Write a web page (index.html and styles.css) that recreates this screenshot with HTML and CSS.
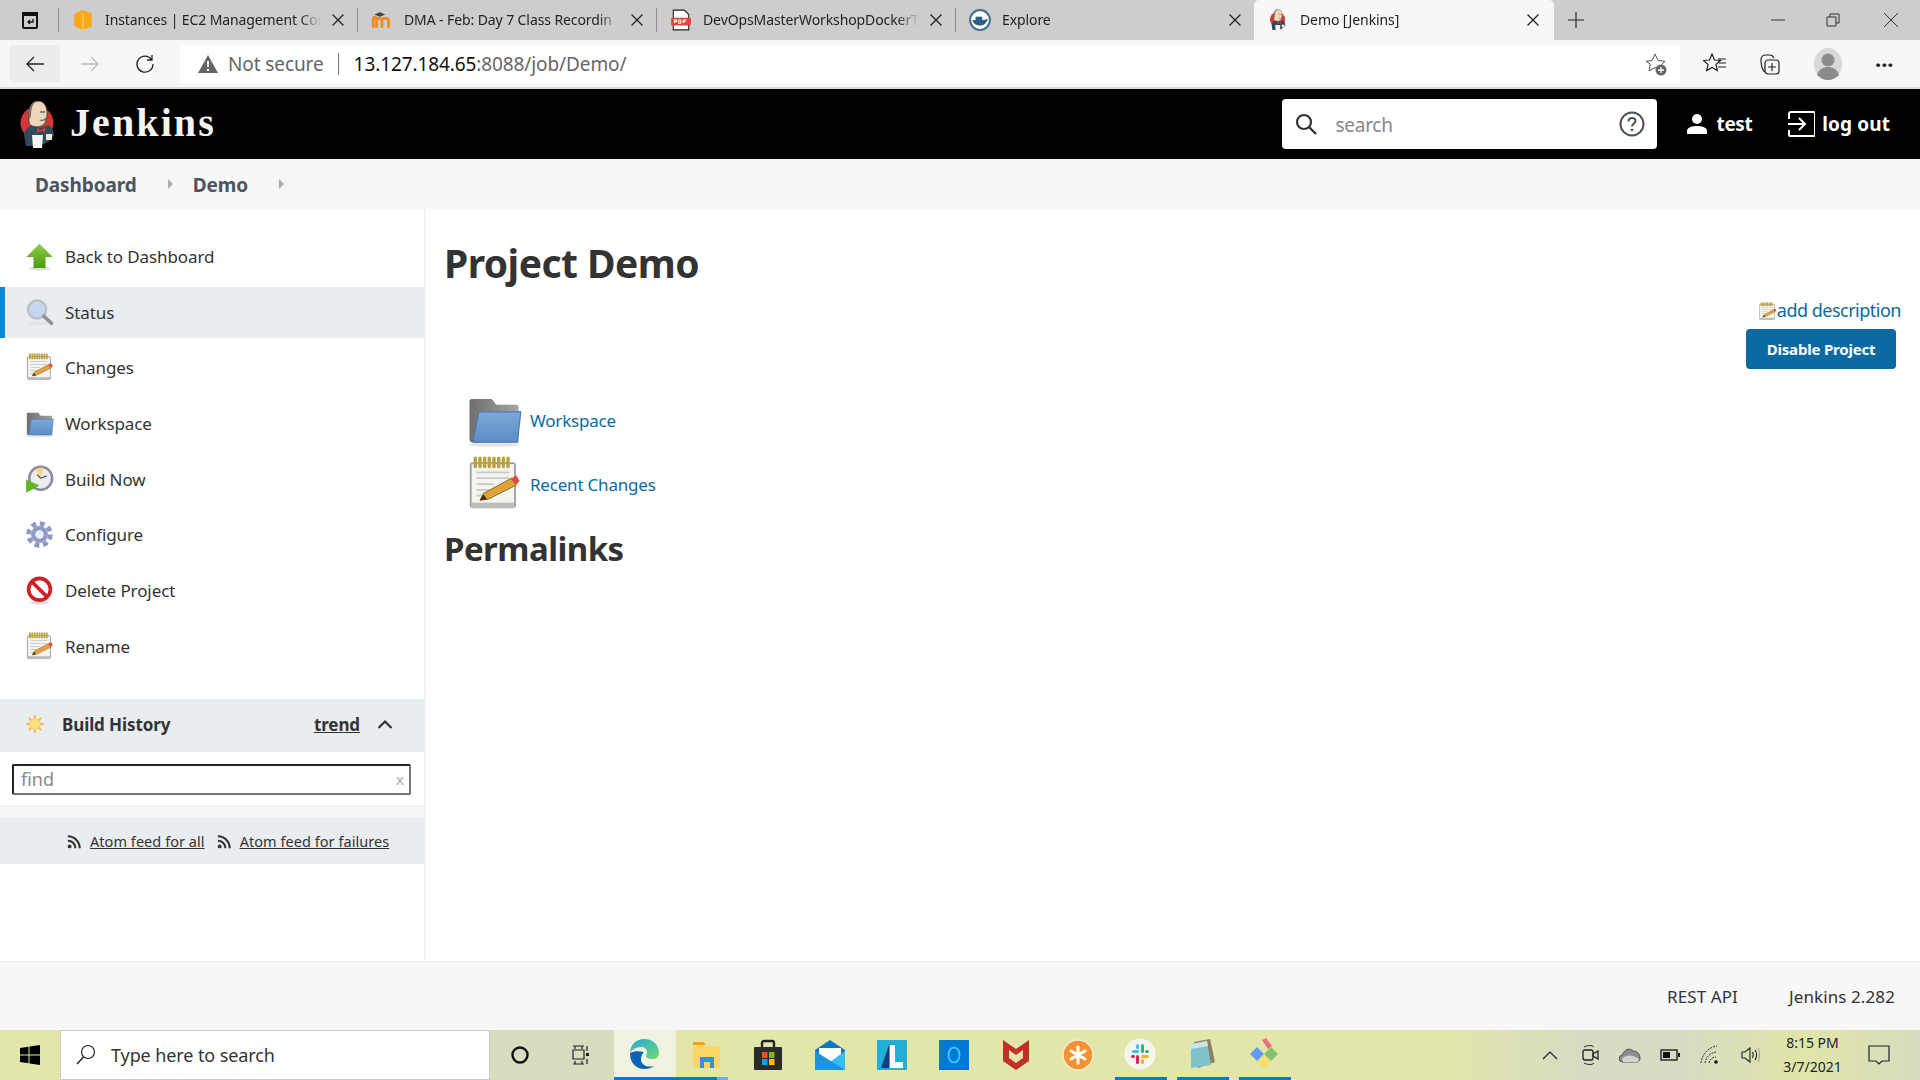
FILE: index.html
```html
<!DOCTYPE html>
<html lang="en">
<head>
    <meta charset="UTF-8">
    <title>Demo [Jenkins]</title>
    <link rel="stylesheet" href="styles.css">
</head>
<body>
    <svg class="defs" aria-hidden="true">
        <defs>
            <linearGradient id="gGreen" x1="0" y1="0" x2="0" y2="1"><stop offset="0" stop-color="#8ccf4a"/><stop offset="1" stop-color="#4c9a0c"/></linearGradient>
            <linearGradient id="gBlue" x1="0" y1="0" x2="0" y2="1"><stop offset="0" stop-color="#7fa9d8"/><stop offset="1" stop-color="#5a8cc6"/></linearGradient>
            <linearGradient id="gGray" x1="0" y1="0" x2="1" y2="0"><stop offset="0" stop-color="#6f6f6f"/><stop offset="1" stop-color="#a3a3a3"/></linearGradient>
            <linearGradient id="gEdge" x1="0" y1="0" x2="1" y2="1"><stop offset="0" stop-color="#2aa7e0"/><stop offset="1" stop-color="#6fd96b"/></linearGradient>
            <symbol id="up" viewBox="0 0 48 48"><ellipse cx="24" cy="44" rx="18" ry="3" fill="#ddd"/><polygon points="24,3 46,25 34,25 34,43 14,43 14,25 2,25" fill="url(#gGreen)"/></symbol>
            <symbol id="lens" viewBox="0 0 48 48"><ellipse cx="22" cy="42" rx="16" ry="3" fill="#e2e2e2"/><circle cx="20" cy="19" r="15" fill="#c3d8f0" stroke="#bcc0c4" stroke-width="4"/><line x1="31" y1="30" x2="44" y2="42" stroke="#8f9499" stroke-width="6" stroke-linecap="round"/></symbol>
            <symbol id="note" viewBox="0 0 48 48"><rect x="4" y="6" width="38" height="38" rx="2" fill="#f4f4f0" stroke="#9a9a9a" stroke-width="1.500"/><rect x="4.500" y="40" width="37" height="4.500" fill="#bdbdbd"/><path d="M8 2v7M12 2v7M16 2v7M20 2v7M24 2v7M28 2v7M32 2v7M36 2v7" stroke="#b9a23f" stroke-width="3" stroke-linecap="round"/><path d="M9 14H37M9 19H37M9 24H24M9 29H20M9 34H16" stroke="#c9c9c9" stroke-width="1.500"/><polygon points="12,38 15,32 39,19 43,25 19,37" fill="#e0a23c" stroke="#8d6420" stroke-width=".8"/><polygon points="38.500,19.500 43,16.500 46,21.500 42.500,25" fill="#df4b3c"/><polygon points="12,38 15,33 18,37" fill="#3b2a14"/></symbol>
            <symbol id="folder" viewBox="0 0 48 48"><ellipse cx="24" cy="45" rx="22" ry="2" fill="#e4e4e4"/><path d="M3 8a2 2 0 0 1 2-2h17l4 5h17a2 2 0 0 1 2 2v30H5a2 2 0 0 1-2-2z" fill="url(#gGray)"/><path d="M11 17H47L44 43H6z" fill="url(#gBlue)" stroke="#4a79b2" stroke-width="1"/></symbol>
            <symbol id="clock" viewBox="0 0 48 48"><circle cx="26" cy="22" r="19" fill="#ececf0" stroke="#8c8aa0" stroke-width="4"/><path d="M26 22L17 7A18 18 0 0 1 31 5z" fill="#f0d98c"/><path d="M26 22L20 16M26 22L36 18" stroke="#555" stroke-width="2"/><polygon points="2,24 24,34 2,46" fill="#62b51c"/></symbol>
            <symbol id="gear" viewBox="0 0 48 48"><circle cx="24" cy="24" r="14" fill="#8f9bc6"/><circle cx="24" cy="24" r="18" fill="none" stroke="#8d99c4" stroke-width="8" stroke-dasharray="8 6.140"/><circle cx="24" cy="24" r="7" fill="#eef0f6"/></symbol>
            <symbol id="stop" viewBox="0 0 48 48"><ellipse cx="24" cy="44" rx="16" ry="3" fill="#ddd"/><circle cx="24" cy="22" r="18" fill="#fff" stroke="#cf2027" stroke-width="6"/><line x1="11" y1="9" x2="37" y2="35" stroke="#cf2027" stroke-width="6"/></symbol>
            <symbol id="rss" viewBox="0 0 16 16"><circle cx="3" cy="13" r="2.200" fill="#333"/><path d="M1 6.500A8.500 8.500 0 0 1 9.500 15M1 1.500A13.500 13.500 0 0 1 14.500 15" fill="none" stroke="#333" stroke-width="2.400"/></symbol>
            <symbol id="x" viewBox="0 0 16 16"><path d="M2.500 2.500L13.500 13.500M13.500 2.500L2.500 13.500" stroke="#222" stroke-width="1.300" fill="none"/></symbol>
            <symbol id="jenkins" viewBox="0 0 36 48"><circle cx="17" cy="23" r="16.500" fill="#d33833"/><path d="M6 46L4 35C5 29 9 26 13 25L20 28 28 25C32 27 34 31 34 36L28 42 20 46z" fill="#2f4a5c"/><path d="M9.500 24C7 13 9 2 18 1c7 0 9.500 7 9 14-.5 6-2.500 10-7 11.500-4 1-8 0-10.500-2.500z" fill="#f0d6b8" stroke="#3a3330" stroke-width=".8"/><path d="M11 16C11 7 13 3 17 1 12 1 8 6 9.500 20z" fill="#6d6b6d"/><path d="M20 12h5M20 20c2 1 5 0 6-2" stroke="#49728b" stroke-width="1.300" fill="none"/><polygon points="17,28 21,30 25,27 25,32 21,31 17,33" fill="#d33833"/><path d="M12 35h11l-1 13h-9z" fill="#f4f4f4"/><rect x="26" y="34" width="6" height="6" fill="#f0e4d4"/></symbol>
        </defs>
    </svg>

    <div class="screen">
        <!-- browser tabs -->
        <div class="tabstrip">
            <div class="tabmenu">
                <svg class="i20" viewBox="0 0 20 20"><path d="M3 3h14v14a1 1 0 0 1-1 1H4a1 1 0 0 1-1-1z" fill="none" stroke="#111" stroke-width="2"/><path d="M3 3h14v3H3z" fill="#111"/><path d="M13 9v3H8m2-2l-2 2 2 2" fill="none" stroke="#111" stroke-width="1.300"/></svg>
            </div>
            <div class="tab">
                <svg class="fav" viewBox="0 0 20 20"><path d="M10 1l8 3v12l-8 3-8-3V4z" fill="#f7a81b"/><path d="M10 4v15" stroke="#fbd071"/></svg>
                <span class="tabtitle">Instances | EC2 Management Cor</span>
                <svg class="tabx"><use href="#x"/></svg>
            </div>
            <div class="tab">
                <svg class="fav" viewBox="0 0 20 20"><path d="M2 17V9c0-2 3-2 3 0v8M5 10c0-2 5-2 5 0v7M10 10c0-2 6-2 6 0v7" fill="none" stroke="#f18a1c" stroke-width="2.500"/><path d="M3 5l5-2 5 2-5 2z" fill="#444"/></svg>
                <span class="tabtitle">DMA - Feb: Day 7 Class Recordin</span>
                <svg class="tabx"><use href="#x"/></svg>
            </div>
            <div class="tab">
                <svg class="fav" viewBox="0 0 20 20"><path d="M3 1h10l4 4v14H3z" fill="#fff" stroke="#222"/><rect x="1" y="8" width="18" height="7" rx="1" fill="#ee3d3d"/><path d="M4 13v-3h2v1.500H4M8 10v3h1.500l.5-1.500-.5-1.500zM12 13v-3h3M12 11.500h2" stroke="#fff" fill="none"/></svg>
                <span class="tabtitle">DevOpsMasterWorkshopDockerT</span>
                <svg class="tabx"><use href="#x"/></svg>
            </div>
            <div class="tab">
                <svg class="fav" viewBox="0 0 20 20"><circle cx="10" cy="10" r="9" fill="#fff" stroke="#3f6f8f" stroke-width="1.800"/><path d="M3 10h11c1-1 2-1 3-1-1 4-4 6-7 6-4 0-6-2-7-5z" fill="#2e5f80"/><path d="M6 7h6v3H6z" fill="#2e5f80"/></svg>
                <span class="tabtitle">Explore</span>
                <svg class="tabx"><use href="#x"/></svg>
            </div>
            <div class="tab tab-active">
                <svg class="fav"><use href="#jenkins"/></svg>
                <span class="tabtitle">Demo [Jenkins]</span>
                <svg class="tabx"><use href="#x"/></svg>
            </div>
            <svg class="newtab" viewBox="0 0 20 20"><path d="M10 1v18M1 10h18" stroke="#222" stroke-width="1.300"/></svg>
            <div class="winbtns">
                <svg class="i16" viewBox="0 0 16 16"><path d="M1 8h14" stroke="#333"/></svg>
                <svg class="i16" viewBox="0 0 16 16"><path d="M2 5h9v9H2zM5 5V2h9v9h-3" fill="none" stroke="#333"/></svg>
                <svg class="i16" viewBox="0 0 16 16"><path d="M1 1l14 14M15 1L1 15" stroke="#333"/></svg>
            </div>
        </div>

        <!-- address bar -->
        <div class="toolbar">
            <div class="navbtn navbtn-on"><svg class="i20" viewBox="0 0 20 20"><path d="M19 10H2M9 3l-7 7 7 7" fill="none" stroke="#222" stroke-width="1.300"/></svg></div>
            <div class="navbtn navbtn-next"><svg class="i20" viewBox="0 0 20 20"><path d="M1 10h17M11 3l7 7-7 7" fill="none" stroke="#bbb" stroke-width="1.300"/></svg></div>
            <div class="navbtn navbtn-next"><svg class="i20" viewBox="0 0 20 20"><path d="M16.500 5.500A8 8 0 1 0 18 10M17 1v5h-5" fill="none" stroke="#222" stroke-width="1.300"/></svg></div>
            <div class="omnibox">
                <svg class="warn" viewBox="0 0 20 18"><path d="M10 0l10 18H0z" fill="#666"/><path d="M10 6v6M10 14v2" stroke="#fff" stroke-width="2"/></svg>
                <span class="notsecure">Not secure</span>
                <span class="omnisep"></span>
                <span class="url">13.127.184.65<span class="urlrest">:8088/job/Demo/</span></span>
                <svg class="omnistar" viewBox="0 0 24 24"><path d="M11 2l3 6.500 7 .8-5 4.700 1 4-6-2.500-6 3.500 1.300-7L2 9.300l6-.8z" fill="#fff" stroke="#555"/><circle cx="17" cy="18" r="5.500" fill="#666"/><path d="M17 15v6M14 18h6" stroke="#fff" stroke-width="1.300"/></svg>
            </div>
            <div class="toolicons">
                <svg class="i24" viewBox="0 0 24 24"><path d="M9 2l2.500 6 6 .5-4.500 4 1.300 6-5.300-3-5.300 3 1.300-6-4.500-4 6-.5zM15 7h8M16 11h7M15 15h8" fill="none" stroke="#222" stroke-width="1.200"/></svg>
                <svg class="i24" viewBox="0 0 24 24"><path d="M7 20C4 18 3 14 3 8c0-3 2-5 5-5h4c2 0 3 1 4 3" fill="none" stroke="#222" stroke-width="1.200"/><rect x="7" y="8" width="14" height="14" rx="3" fill="none" stroke="#222" stroke-width="1.200"/><path d="M14 11v8M10 15h8" stroke="#222" stroke-width="1.200"/></svg>
                <svg class="avatar" viewBox="0 0 28 32"><ellipse cx="14" cy="16" rx="14" ry="16" fill="#d8d8d8"/><circle cx="14" cy="12" r="6.500" fill="#8b8b8b"/><path d="M3 27c2-6 6-8 11-8s9 2 11 8c-3 3-7 5-11 5s-8-2-11-5z" fill="#8b8b8b"/></svg>
                <span class="dots">···</span>
            </div>
        </div>

        <!-- jenkins header -->
        <header class="topbar">
            <svg class="logo"><use href="#jenkins"/></svg>
            <a class="brand">Jenkins</a>
            <div class="searchbox">
                <svg class="i22" viewBox="0 0 22 22"><circle cx="9" cy="9" r="7" fill="none" stroke="#333" stroke-width="2.200"/><path d="M14 14l7 7" stroke="#333" stroke-width="2.400"/></svg>
                <span class="searchtext">search</span>
                <svg class="helpicon" viewBox="0 0 26 26"><circle cx="13" cy="13" r="11.500" fill="none" stroke="#4a5058" stroke-width="2"/><path d="M9.500 10.500c0-5 7.500-4.500 7-.5 0 2.500-3.500 2.500-3.500 5.500" fill="none" stroke="#4a5058" stroke-width="2"/><circle cx="13" cy="19" r="1.300" fill="#4a5058"/></svg>
            </div>
            <div class="topuser">
                <svg class="i22" viewBox="0 0 22 22"><circle cx="11" cy="6" r="5" fill="#fff"/><path d="M1 21v-3c0-4 6-5 10-5s10 1 10 5v3z" fill="#fff"/></svg>
                <span>test</span>
            </div>
            <div class="toplogout">
                <svg class="logouticon" viewBox="0 0 28 26"><path d="M2 8V3a2 2 0 0 1 2-2h22a2 2 0 0 1 2 1v22a1 1 0 0 1-1 1H3a1 1 0 0 1-1-1v-5M1 13h17M12 7l6 6-6 6" fill="none" stroke="#fff" stroke-width="2"/></svg>
                <span>log out</span>
            </div>
        </header>

        <nav class="breadcrumbs">
            <a class="crumb crumb-first">Dashboard</a>
            <span class="crumbarrow"></span>
            <a class="crumb">Demo</a>
            <span class="crumbarrow"></span>
        </nav>

        <div class="page">
            <aside class="sidebar">
                <ul class="tasks">
                    <li class="task"><svg class="taskicon"><use href="#up"/></svg>Back to Dashboard</li>
                    <li class="task task-active"><svg class="taskicon"><use href="#lens"/></svg>Status</li>
                    <li class="task"><svg class="taskicon"><use href="#note"/></svg>Changes</li>
                    <li class="task"><svg class="taskicon"><use href="#folder"/></svg>Workspace</li>
                    <li class="task"><svg class="taskicon"><use href="#clock"/></svg>Build Now</li>
                    <li class="task"><svg class="taskicon"><use href="#gear"/></svg>Configure</li>
                    <li class="task"><svg class="taskicon"><use href="#stop"/></svg>Delete Project</li>
                    <li class="task"><svg class="taskicon"><use href="#note"/></svg>Rename</li>
                </ul>

                <div class="history">
                    <svg class="sun" viewBox="0 0 20 20"><path d="M10 0v20M0 10h20M3 3l14 14M17 3L3 17" stroke="#f7b84b" stroke-width="2"/><circle cx="10" cy="10" r="6" fill="#fde27a" stroke="#f7c35f"/></svg>
                    <span class="historytitle">Build History</span>
                    <a class="trend">trend</a>
                    <svg class="caret" viewBox="0 0 16 10"><path d="M1.500 9L8 2.500 14.500 9" fill="none" stroke="#333" stroke-width="2.200"/></svg>
                </div>
                <div class="findrow">
                    <div class="findbox"><span>find</span><span class="findx">x</span></div>
                </div>
                <div class="findgap"></div>
                <div class="feeds">
                    <svg class="rssicon"><use href="#rss"/></svg><a class="feed">Atom feed for all</a>
                    <svg class="rssicon rssicon-two"><use href="#rss"/></svg><a class="feed">Atom feed for failures</a>
                </div>
            </aside>

            <main class="content">
                <h1 class="title">Project Demo</h1>
                <div class="descrow">
                    <svg class="descicon"><use href="#note"/></svg><a class="link">add description</a>
                </div>
                <div class="disablerow">
                    <button class="disable">Disable Project</button>
                </div>
                <div class="joblinks">
                    <div class="joblink"><svg class="jobicon"><use href="#folder"/></svg><a class="link">Workspace</a></div>
                    <div class="joblink"><svg class="jobicon"><use href="#note"/></svg><a class="link">Recent Changes</a></div>
                </div>
                <h2 class="subtitle">Permalinks</h2>
            </main>
        </div>

        <footer class="footer">
            <a>REST API</a>
            <a class="version">Jenkins 2.282</a>
        </footer>

        <!-- windows taskbar -->
        <div class="taskbar">
            <div class="startbtn">
                <svg class="i20" viewBox="0 0 20 20"><path d="M0 3l8.500-1.200V9.500H0zM9.500 1.600L20 0v9.500H9.500zM0 10.500h8.500v7.700L0 17zM9.500 10.500H20V20L9.500 18.400z" fill="#000"/></svg>
            </div>
            <div class="winsearch">
                <svg class="i22" viewBox="0 0 22 22"><circle cx="13" cy="8" r="6.500" fill="none" stroke="#222" stroke-width="1.200"/><path d="M8.500 13L2 20" stroke="#222" stroke-width="1.400"/></svg>
                <span>Type here to search</span>
            </div>
            <div class="syscell syscell-dim"><svg class="i20" viewBox="0 0 20 20"><circle cx="10" cy="10" r="7.500" fill="none" stroke="#111" stroke-width="2.400"/></svg></div>
            <div class="syscell syscell-dim syscell-wide"><svg class="i20" viewBox="0 0 20 20"><path d="M3 1h11M3 19h11M5 1v3M12 1v3M5 16v3M12 16v3M3 5h11v9H3zM17 1v5M17 14v5" fill="none" stroke="#222" stroke-width="1.200"/><rect x="16" y="8" width="3" height="3" fill="#222"/></svg></div>

            <div class="pin pin-open">
                <svg class="pinicon" viewBox="0 0 32 32"><path d="M2 16C2 6 9 1 16 1c9 0 15 6 15 14 0 4-3 6-7 6-3 0-6-1-6-3 0-1 1-2 1-4 0-3-3-5-6-5-6 0-11 4-11 7z" fill="url(#gEdge)"/><path d="M2 16c0 9 7 15 14 15 4 0 8-1 10-3-7 2-13-1-13-7 0-3 1-5 3-7-8-2-14 0-14 2z" fill="#0b62b5"/></svg>
            </div>
            <div class="pin pin-running">
                <svg class="pinicon" viewBox="0 0 32 32"><path d="M3 4h10l3 3H3z" fill="#e6a41c"/><rect x="3" y="8" width="27" height="22" rx="1" fill="#fbd667"/><path d="M10 30v-11h14v11h-4v-6h-6v6z" fill="#3a8fd8"/></svg>
            </div>
            <div class="pin">
                <svg class="pinicon" viewBox="0 0 32 32"><path d="M10 10V4a2 2 0 0 1 2-2h8a2 2 0 0 1 2 2v6" fill="none" stroke="#222" stroke-width="2.400"/><rect x="2" y="8" width="28" height="23" rx="1" fill="#2b2b2b"/><rect x="10" y="13" width="5.500" height="6" fill="#f25022"/><rect x="17" y="13" width="5.500" height="6" fill="#7fba00"/><rect x="10" y="20" width="5.500" height="6" fill="#00a4ef"/><rect x="17" y="20" width="5.500" height="6" fill="#ffb900"/></svg>
            </div>
            <div class="pin">
                <svg class="pinicon" viewBox="0 0 32 32"><path d="M1 11L16 1l15 10v20H1z" fill="#0b78c6"/><path d="M5 9h22v9l-11 6-11-6z" fill="#fff"/><path d="M1 12l15 11 15-11v19H1z" fill="#38bdf0"/><path d="M1 12l30 19H1z" fill="#1b95dd"/></svg>
            </div>
            <div class="pin">
                <svg class="pinicon" viewBox="0 0 32 32"><rect x="1" y="1" width="30" height="30" fill="#22aed9"/><path d="M5 29L13 6v23z" fill="#123a7c"/><path d="M14 6h5v17h8v6H14z" fill="#fff"/></svg>
            </div>
            <div class="pin">
                <svg class="pinicon" viewBox="0 0 32 32"><rect x="1" y="1" width="30" height="30" fill="#0078d7"/><ellipse cx="16" cy="16" rx="5.500" ry="7.500" fill="none" stroke="#35c8f0" stroke-width="2"/></svg>
            </div>
            <div class="pin">
                <svg class="pinicon" viewBox="0 0 32 32"><path d="M3 1l13 9 13-9v21L16 31 3 22z" fill="#c0302a"/><path d="M9 11l7 5 7-5v8l-7 5-7-5z" fill="#e3e6a9"/></svg>
            </div>
            <div class="pin">
                <svg class="pinicon" viewBox="0 0 32 32"><circle cx="16" cy="16" r="15" fill="#f59331" stroke="#f8e9d3" stroke-width="1.500"/><path d="M16 8v16M9 12l14 8M23 12L9 20" stroke="#fff" stroke-width="3" stroke-linecap="round"/></svg>
            </div>
            <div class="pin pin-open2">
                <svg class="pinicon" viewBox="0 0 32 32"><circle cx="16" cy="16" r="15.500" fill="#f6f6f0"/><rect x="8" y="12" width="7" height="3" rx="1.500" fill="#36c5f0"/><rect x="12" y="6" width="3" height="5" rx="1.500" fill="#36c5f0"/><rect x="17" y="6" width="3" height="9" rx="1.500" fill="#2eb67d"/><rect x="21" y="12" width="4" height="3" rx="1.500" fill="#2eb67d"/><rect x="17" y="17" width="8" height="3" rx="1.500" fill="#ecb22e"/><rect x="17" y="21" width="3" height="5" rx="1.500" fill="#ecb22e"/><rect x="12" y="17" width="3" height="9" rx="1.500" fill="#e01e5a"/><rect x="7" y="17" width="4" height="3" rx="1.500" fill="#e01e5a"/></svg>
            </div>
            <div class="pin pin-open2">
                <svg class="pinicon" viewBox="0 0 32 32"><path d="M8 4l16-3 5 23-17 6z" fill="#8a7f63"/><path d="M5 6l16-3 4 24-20 3z" fill="#7fc2cc"/><path d="M5 6l16-3 1 5-17 3z" fill="#c9e3e6"/></svg>
            </div>
            <div class="pin pin-open2">
                <svg class="pinicon" viewBox="0 0 32 32"><polygon points="9,9 16,16 9,23 2,16" fill="#5d9bf2"/><polygon points="16,17 23,24 16,31 9,24" fill="#f6df6f"/><polygon points="23,9 30,16 23,23 16,16" fill="#86c06c"/><polygon points="14,2 18,0 24,8 20,11" fill="#ee6f7c"/></svg>
            </div>

            <div class="tray">
                <div class="traycell"><svg class="i16" viewBox="0 0 16 16"><path d="M1 12l7-7 7 7" fill="none" stroke="#222" stroke-width="1.200"/></svg></div>
                <div class="traycell"><svg class="i20" viewBox="0 0 20 20"><path d="M4 2c4-2 8-2 10 0M4 18c4 2 8 2 10 0" fill="none" stroke="#222"/><rect x="3" y="5" width="10" height="10" rx="2" fill="none" stroke="#222" stroke-width="1.300"/><path d="M13 9l5-3v8l-5-3z" fill="none" stroke="#222" stroke-width="1.300"/></svg></div>
                <div class="traycell"><svg class="i22" viewBox="0 0 22 16"><path d="M4 15a3.500 3.500 0 0 1-.5-7C5 3 10 0 14 4c4 0 7 3 7 7 0 2-1 4-3 4z" fill="#8f8f8f" stroke="#333" stroke-width=".8"/><path d="M3 12c5-5 11-4 17 0 0 2-1 3-2 3H4z" fill="#d4d4d4"/></svg></div>
                <div class="traycell"><svg class="i20" viewBox="0 0 20 12"><rect x="1" y="1" width="16" height="10" fill="none" stroke="#111" stroke-width="1.300"/><rect x="3" y="3" width="7" height="6" fill="#111"/><rect x="18" y="4" width="2" height="4" fill="#111"/></svg></div>
                <div class="traycell"><svg class="i20" viewBox="0 0 20 20"><path d="M1 18C2 9 9 2 17 1M5 18c1-6 5-10 11-11M9 18c.500-3 3-6 7-6" fill="none" stroke="#333" stroke-dasharray="2 1"/><circle cx="16" cy="17" r="1.800" fill="#111"/></svg></div>
                <div class="traycell"><svg class="i20" viewBox="0 0 20 20"><path d="M2 7h3l5-4v14l-5-4H2zM12.500 7c1 2 1 4 0 6M15 5c2 3 2 7 0 10" fill="none" stroke="#222" stroke-width="1.100"/><path d="M18 3c2 4 2 10 0 14" fill="none" stroke="#999"/></svg></div>
                <div class="clock"><div>8:15 PM</div><div>3/7/2021</div></div>
                <div class="notify"><svg class="i22" viewBox="0 0 22 20"><path d="M1 1h20v15h-7l-3 3-3-3H1z" fill="none" stroke="#222" stroke-width="1.200"/></svg></div>
            </div>
        </div>
    </div>
</body>
</html>
```

FILE: styles.css
```css
* {
    box-sizing: border-box;
}
html, body {
    margin: 0;
    padding: 0;
}
body {
    font-family: "Noto Sans", "Liberation Sans", sans-serif;
    color: #333;
    background: #fff;
}
a {
    color: inherit;
}
svg {
    display: block;
    flex-shrink: 0;
}
.defs {
    position: absolute;
    width: 0;
    height: 0;
}
.screen {
    width: 1920px;
    height: 1080px;
    display: flex;
    flex-direction: column;
    overflow: hidden;
}
.i16 { width: 16px; height: 16px; }
.i20 { width: 20px; height: 20px; }
.i22 { width: 22px; height: 22px; }
.i24 { width: 24px; height: 24px; }

/* tabs */
.tabstrip {
    height: 40px;
    background: #cdcdcd;
    display: flex;
    align-items: center;
}
.tabmenu {
    width: 59px;
    height: 24px;
    padding-left: 20px;
    border-right: 1px solid #8d8d8d;
    display: flex;
    align-items: center;
}
.tab {
    width: 299px;
    height: 24px;
    padding-left: 13px;
    border-right: 1px solid #8d8d8d;
    display: flex;
    align-items: center;
    font-size: 14px;
    letter-spacing: -0.1px;
    color: #222;
}
.tab:nth-child(5) {
    border-right: none;
}
.fav {
    width: 22px;
    height: 22px;
    margin-right: 11px;
}
.tabtitle {
    width: 216px;
    padding-bottom: 2px;
    white-space: nowrap;
    -webkit-mask-image: linear-gradient(90deg, #000 90%, transparent);
    mask-image: linear-gradient(90deg, #000 90%, transparent);
}
.tabx {
    width: 16px;
    height: 16px;
    margin-left: 9px;
}
.tab-active {
    height: 40px;
    width: 300px;
    background: #f7f7f7;
    border-right: none;
    border-radius: 5px 5px 0 0;
    margin-left: -1px;
    padding-left: 13px;
}
.newtab {
    width: 18px;
    height: 18px;
    margin-left: 13px;
}
.winbtns {
    margin-left: auto;
    margin-right: 21px;
    display: flex;
    gap: 42px;
}
.winbtns svg:first-child {
    margin-right: -3px;
}

/* toolbar */
.toolbar {
    height: 49px;
    padding: 5px 0 4px 10px;
    background: #f7f7f7;
    border-bottom: 2px solid #dcdcdc;
    display: flex;
}
.navbtn {
    width: 50px;
    height: 37px;
    display: flex;
    align-items: center;
    justify-content: center;
}
.navbtn-on {
    background: #ededed;
    border-radius: 2px;
}
.navbtn-next {
    margin-left: 5px;
}
.omnibox {
    width: 1500px;
    height: 38px;
    margin-left: 10px;
    padding: 0 16px 0 18px;
    background: #fff;
    border-radius: 4px;
    display: flex;
    align-items: center;
    font-size: 19px;
    letter-spacing: -0.1px;
}
.warn {
    width: 20px;
    height: 18px;
}
.notsecure {
    margin-left: 10px;
    color: #666;
}
.omnisep {
    width: 1px;
    height: 22px;
    margin: 0 15px 0 14px;
    background: #777;
}
.url {
    color: #111;
}
.urlrest {
    color: #666;
}
.omnistar {
    width: 24px;
    height: 24px;
    margin-left: auto;
    margin-right: -4px;
}
.toolicons {
    display: flex;
    align-items: center;
    padding-left: 23px;
}
.toolicons .i24 + .i24 {
    margin-left: 31px;
}
.avatar {
    width: 28px;
    height: 32px;
    margin-left: 32px;
}
.dots {
    margin-left: 33px;
    font-size: 22px;
    font-weight: 700;
    color: #222;
}

/* jenkins header */
.topbar {
    height: 70px;
    background: #000;
    color: #fff;
    display: flex;
    align-items: center;
    padding-left: 20px;
}
.logo {
    width: 36px;
    height: 48px;
}
.brand {
    margin-left: 14px;
    padding-bottom: 3px;
    font-family: "Liberation Serif", serif;
    font-size: 40px;
    font-weight: 700;
    letter-spacing: 2.100px;
    color: #f3f3f3;
}
.searchbox {
    width: 375px;
    height: 50px;
    margin-left: auto;
    padding: 0 12px 0 13px;
    background: #fff;
    border-radius: 4px;
    display: flex;
    align-items: center;
    font-size: 19px;
    color: #888;
}
.searchtext {
    margin-left: 19px;
    padding-top: 2px;
    letter-spacing: -0.3px;
}
.helpicon {
    width: 26px;
    height: 26px;
    margin-left: auto;
}
.topuser,
.toplogout {
    display: flex;
    align-items: center;
    font-size: 19px;
    font-weight: 700;
    letter-spacing: -0.4px;
}
.topuser {
    margin-left: 29px;
    gap: 9px;
}
.toplogout {
    margin-left: 35px;
    margin-right: 30px;
    gap: 7px;
    letter-spacing: 0.1px;
}
.logouticon {
    width: 28px;
    height: 26px;
}

/* breadcrumbs */
.breadcrumbs {
    height: 50px;
    padding: 2px 0 0 35px;
    background: #f7f7f7;
    display: flex;
    align-items: center;
    font-size: 19px;
    font-weight: 700;
    letter-spacing: -0.1px;
    color: #4d545d;
}
.crumbarrow {
    width: 0;
    height: 0;
    margin: -2px 20px 0 31px;
    border-left: 5px solid #aaa;
    border-top: 5px solid transparent;
    border-bottom: 5px solid transparent;
}

/* sidebar */
.page {
    flex: 1;
    display: flex;
    min-height: 0;
}
.sidebar {
    width: 426px;
    border-right: 2px solid #f3f3f3;
}
.tasks {
    list-style: none;
    margin: 0;
    padding: 22px 0 27px;
    display: flex;
    flex-direction: column;
    gap: 4.700px;
}
.task {
    height: 51px;
    padding-left: 25px;
    display: flex;
    align-items: center;
    font-size: 17px;
    letter-spacing: -0.1px;
    color: #333;
}
.task-active {
    background: #e9edf0;
    border-left: 5px solid #0b87d6;
    padding-left: 20px;
}
.taskicon {
    width: 29px;
    height: 29px;
    margin-right: 11px;
}
.history {
    height: 53px;
    padding: 0 31px 2px 26px;
    background: #e9edf0;
    display: flex;
    align-items: center;
    font-size: 17px;
    font-weight: 700;
    letter-spacing: -0.1px;
}
.sun {
    width: 18px;
    height: 18px;
}
.historytitle {
    margin-left: 18px;
}
.trend {
    margin-left: auto;
    text-decoration: underline;
}
.caret {
    width: 16px;
    height: 10px;
    margin-left: 17px;
}
.findrow {
    height: 55px;
    padding: 12px 13px 0 12px;
    border-bottom: 2px solid #f0f0f0;
}
.findbox {
    height: 31px;
    padding: 0 8px 0 7px;
    border: 2px solid;
    border-color: #222 #767676 #767676 #222;
    border-radius: 2px;
    display: flex;
    align-items: center;
    justify-content: space-between;
    font-size: 18px;
    color: #8a8a8a;
}
.findx {
    font-size: 15px;
    color: #aaa;
    margin-right: -3px;
}
.findgap {
    height: 11px;
    background: #f7f7f7;
}
.feeds {
    height: 46px;
    padding-left: 67px;
    background: #e9edf0;
    display: flex;
    align-items: center;
    font-size: 14.500px;
    letter-spacing: 0.05px;
}
.rssicon {
    width: 14px;
    height: 14px;
    margin-right: 9px;
    margin-top: 3px;
}
.rssicon-two {
    margin-left: 12px;
}
.feed {
    text-decoration: underline;
}

/* main */
.content {
    flex: 1;
    padding: 0 20px 0 18px;
    min-width: 0;
}
.title {
    margin: 27px 0 0;
    font-size: 39px;
    line-height: 54px;
    font-weight: 700;
    letter-spacing: -0.55px;
    color: #333;
}
.descrow {
    margin-top: 8px;
    display: flex;
    justify-content: flex-end;
    align-items: center;
    font-size: 18px;
    letter-spacing: -0.5px;
    margin-right: -1px;
}
.descicon {
    width: 19px;
    height: 19px;
    margin-top: 3px;
}
.link {
    color: #0b6aa2;
}
.disablerow {
    display: flex;
    justify-content: flex-end;
    margin-top: 7px;
    margin-right: 4px;
}
.disable {
    width: 150px;
    height: 40px;
    border: none;
    border-radius: 4px;
    background: #0b6aa2;
    color: #fff;
    font-family: inherit;
    font-size: 15px;
    font-weight: 700;
    letter-spacing: -0.2px;
}
.joblinks {
    margin-top: 19px;
    padding-left: 22px;
}
.joblink {
    height: 64px;
    display: flex;
    align-items: center;
    font-size: 17px;
    letter-spacing: -0.2px;
}
.jobicon {
    width: 56px;
    height: 56px;
    margin-right: 8px;
}
.subtitle {
    margin: 10px 0 0;
    font-size: 33px;
    line-height: 46px;
    font-weight: 700;
    letter-spacing: -0.55px;
    color: #333;
}

/* footer */
.footer {
    height: 69px;
    padding-right: 25px;
    background: #f7f7f7;
    border-top: 1px solid #eee;
    display: flex;
    align-items: center;
    justify-content: flex-end;
    font-size: 17px;
    letter-spacing: 0.1px;
    color: #333;
}
.version {
    margin-left: 51px;
}

/* windows taskbar */
.taskbar {
    height: 50px;
    background: linear-gradient(90deg, #e3e6a9 0, #e2e6a8 75%, #d8dcc2 82%, #d8dcc2 88%, #e0e5a8 94%, #d8dcc0 100%);
    display: flex;
    align-items: center;
}
.startbtn {
    width: 60px;
    display: flex;
    justify-content: center;
}
.winsearch {
    width: 430px;
    height: 50px;
    padding-left: 14px;
    background: #fff;
    border: 1px solid #ccc;
    display: flex;
    align-items: center;
    gap: 14px;
    font-size: 18px;
    letter-spacing: -0.1px;
    color: #333;
}
.syscell {
    width: 60px;
    height: 50px;
    display: flex;
    align-items: center;
    justify-content: center;
}
.syscell-wide {
    width: 64px;
    padding-right: 4px;
}
.syscell-dim {
    background: #d9dcbf;
}
.pin {
    width: 62px;
    height: 50px;
    display: flex;
    align-items: center;
    justify-content: center;
}
.pinicon {
    width: 32px;
    height: 32px;
    margin-right: 2px;
}
.pin-open {
    background: #f0f3e2;
    border-bottom: 3px solid #0078d7;
}
.pin-running {
    border-bottom: 3px solid;
    border-image: linear-gradient(90deg, #0078d7 0, #0078d7 66%, #6fb0e8 66%, #6fb0e8 82%, transparent 82%) 1;
}
.pin-open2 {
    border-bottom: 3px solid;
    border-image: linear-gradient(90deg, transparent 0, transparent 6px, #0078d7 6px, #0078d7 56px, transparent 56px) 1;
}
.tray {
    margin-left: auto;
    display: flex;
    align-items: center;
    padding-right: 17px;
}
.traycell {
    width: 40px;
    display: flex;
    justify-content: center;
}
.clock {
    width: 85px;
    text-align: center;
    font-size: 14px;
    line-height: 24px;
    color: #222;
}
.notify {
    width: 48px;
    display: flex;
    justify-content: center;
}
```
